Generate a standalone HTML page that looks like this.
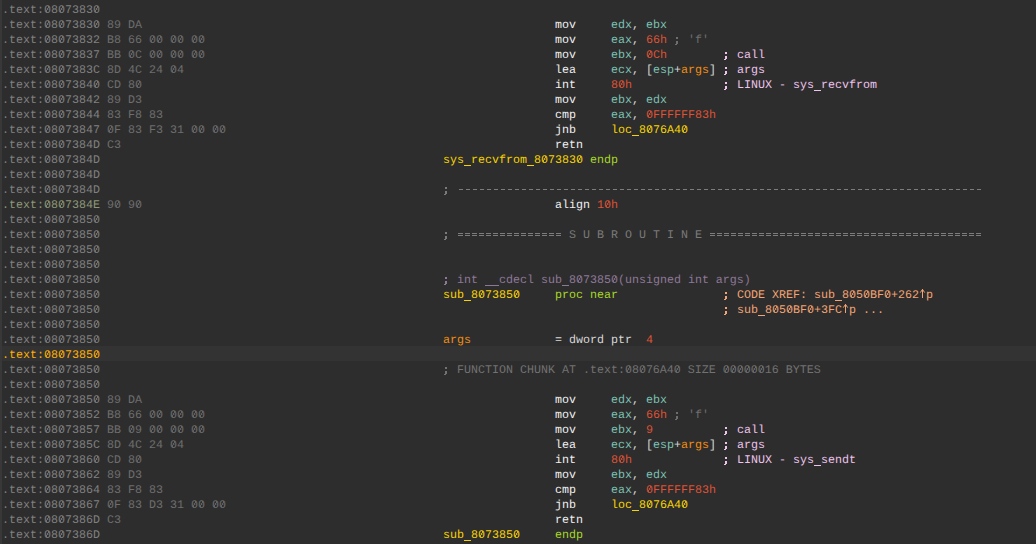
<!DOCTYPE html>
<html><head><meta charset="utf-8"><style>
html,body{margin:0;padding:0;width:1036px;height:544px;overflow:hidden;background:#2d2d2d;}
#v{position:absolute;left:0;top:0;width:1036px;height:544px;background:#2d2d2d;}
#stripe{position:absolute;left:0;top:0;width:2px;height:544px;background:#383838;}
.hlbar{position:absolute;left:2px;width:1034px;height:15px;background:#333333;}
.u{position:relative;}
.u::before{content:'';position:absolute;left:0;width:7px;top:12px;height:1px;background:currentColor;}
.sc{position:relative;-webkit-text-fill-color:transparent;}
.sc::before{content:'';position:absolute;left:2px;top:4px;width:2px;height:2px;background:currentColor;}
.sc::after{content:'';position:absolute;left:1px;top:8px;width:3px;height:4px;background:linear-gradient(currentColor,currentColor) 1px 0/2px 3px no-repeat,linear-gradient(currentColor,currentColor) 0 3px/2px 1px no-repeat;}
.z{position:relative;}
.z::before{content:'';position:absolute;left:3px;top:5px;width:1px;height:2px;background:#2d2d2d;}
.hlz .z::before{background:#333333;}
.z::after{content:'';position:absolute;left:2px;top:3px;width:3px;height:6px;background:linear-gradient(to bottom right,transparent 38%,currentColor 45%,currentColor 55%,transparent 62%);opacity:.8}
.t{position:absolute;white-space:pre;font-family:"Liberation Mono",monospace;font-size:11.6667px;line-height:15px;text-rendering:geometricPrecision;}
.addr{color:#808080;}
.bytes{color:#6e6e6e;}
.mn{color:#f0f0f0;}
.reg{color:#7cc2b4;}
.punc{color:#d8d8d8;}
.num{color:#de5236;}
.acmt{color:#6e6e6e;}
.cmt{color:#eec4ec;}
.argn{color:#f28e10;}
.loc{color:#f6d400;}
.fname{color:#f6d200;}
.kw{color:#a8d828;}
.sep{color:#7a7a7a;}
.proto{color:#8e7898;}
.xref{color:#f2a474;}
.chunk{color:#727272;}
.hladdr{color:#ffb000;}
.addr13{color:#8e9878;}
</style></head>
<body><div id="v"><div id="stripe"></div>
<div class="t" style="left:2px;top:3px"><span class="addr">.text:<span class="z">0</span>8<span class="z">0</span>7383<span class="z">0</span></span></div>
<div class="t" style="left:2px;top:18px"><span class="addr">.text:<span class="z">0</span>8<span class="z">0</span>7383<span class="z">0</span></span></div>
<div class="t bytes" style="left:107px;top:18px">89 DA</div>
<div class="t" style="left:555px;top:18px"><span class="mn">mov</span></div>
<div class="t" style="left:611px;top:18px"><span class="reg">edx</span><span class="punc">, </span><span class="reg">ebx</span></div>
<div class="t" style="left:2px;top:33px"><span class="addr">.text:<span class="z">0</span>8<span class="z">0</span>73832</span></div>
<div class="t bytes" style="left:107px;top:33px">B8 66 <span class="z">0</span><span class="z">0</span> <span class="z">0</span><span class="z">0</span> <span class="z">0</span><span class="z">0</span></div>
<div class="t" style="left:555px;top:33px"><span class="mn">mov</span></div>
<div class="t" style="left:611px;top:33px"><span class="reg">eax</span><span class="punc">, </span><span class="num">66h</span><span class="acmt"> <span class="sc">;</span> 'f'</span></div>
<div class="t" style="left:2px;top:48px"><span class="addr">.text:<span class="z">0</span>8<span class="z">0</span>73837</span></div>
<div class="t bytes" style="left:107px;top:48px">BB <span class="z">0</span>C <span class="z">0</span><span class="z">0</span> <span class="z">0</span><span class="z">0</span> <span class="z">0</span><span class="z">0</span></div>
<div class="t" style="left:555px;top:48px"><span class="mn">mov</span></div>
<div class="t" style="left:611px;top:48px"><span class="reg">ebx</span><span class="punc">, </span><span class="num"><span class="z">0</span>Ch</span></div>
<div class="t" style="left:723px;top:48px"><span class="cmt"><span class="sc">;</span> call</span></div>
<div class="t" style="left:2px;top:63px"><span class="addr">.text:<span class="z">0</span>8<span class="z">0</span>7383C</span></div>
<div class="t bytes" style="left:107px;top:63px">8D 4C 24 <span class="z">0</span>4</div>
<div class="t" style="left:555px;top:63px"><span class="mn">lea</span></div>
<div class="t" style="left:611px;top:63px"><span class="reg">ecx</span><span class="punc">, [</span><span class="reg">esp</span><span class="punc">+</span><span class="argn">args</span><span class="punc">]</span></div>
<div class="t" style="left:723px;top:63px"><span class="cmt"><span class="sc">;</span> args</span></div>
<div class="t" style="left:2px;top:78px"><span class="addr">.text:<span class="z">0</span>8<span class="z">0</span>7384<span class="z">0</span></span></div>
<div class="t bytes" style="left:107px;top:78px">CD 8<span class="z">0</span></div>
<div class="t" style="left:555px;top:78px"><span class="mn">int</span></div>
<div class="t" style="left:611px;top:78px"><span class="num">8<span class="z">0</span>h</span></div>
<div class="t" style="left:723px;top:78px"><span class="cmt"><span class="sc">;</span> LINUX - sys<span class="u"> </span>recvfrom</span></div>
<div class="t" style="left:2px;top:93px"><span class="addr">.text:<span class="z">0</span>8<span class="z">0</span>73842</span></div>
<div class="t bytes" style="left:107px;top:93px">89 D3</div>
<div class="t" style="left:555px;top:93px"><span class="mn">mov</span></div>
<div class="t" style="left:611px;top:93px"><span class="reg">ebx</span><span class="punc">, </span><span class="reg">edx</span></div>
<div class="t" style="left:2px;top:108px"><span class="addr">.text:<span class="z">0</span>8<span class="z">0</span>73844</span></div>
<div class="t bytes" style="left:107px;top:108px">83 F8 83</div>
<div class="t" style="left:555px;top:108px"><span class="mn">cmp</span></div>
<div class="t" style="left:611px;top:108px"><span class="reg">eax</span><span class="punc">, </span><span class="num"><span class="z">0</span>FFFFFF83h</span></div>
<div class="t" style="left:2px;top:123px"><span class="addr">.text:<span class="z">0</span>8<span class="z">0</span>73847</span></div>
<div class="t bytes" style="left:107px;top:123px"><span class="z">0</span>F 83 F3 31 <span class="z">0</span><span class="z">0</span> <span class="z">0</span><span class="z">0</span></div>
<div class="t" style="left:555px;top:123px"><span class="mn">jnb</span></div>
<div class="t" style="left:611px;top:123px"><span class="loc">loc<span class="u"> </span>8<span class="z">0</span>76A4<span class="z">0</span></span></div>
<div class="t" style="left:2px;top:138px"><span class="addr">.text:<span class="z">0</span>8<span class="z">0</span>7384D</span></div>
<div class="t bytes" style="left:107px;top:138px">C3</div>
<div class="t" style="left:555px;top:138px"><span class="mn">retn</span></div>
<div class="t" style="left:2px;top:153px"><span class="addr">.text:<span class="z">0</span>8<span class="z">0</span>7384D</span></div>
<div class="t" style="left:443px;top:153px"><span class="fname">sys<span class="u"> </span>recvfrom<span class="u"> </span>8<span class="z">0</span>7383<span class="z">0</span></span> <span class="kw">endp</span></div>
<div class="t" style="left:2px;top:168px"><span class="addr">.text:<span class="z">0</span>8<span class="z">0</span>7384D</span></div>
<div class="t" style="left:2px;top:183px"><span class="addr">.text:<span class="z">0</span>8<span class="z">0</span>7384D</span></div>
<div class="t" style="left:443px;top:183px"><span class="sep"><span class="sc">;</span></span></div>
<div class="t" style="left:2px;top:198px"><span class="addr13">.text:<span class="z">0</span>8<span class="z">0</span>7384E</span></div>
<div class="t bytes" style="left:107px;top:198px">9<span class="z">0</span> 9<span class="z">0</span></div>
<div class="t" style="left:555px;top:198px"><span class="mn">align</span> <span class="num">1<span class="z">0</span>h</span></div>
<div class="t" style="left:2px;top:213px"><span class="addr">.text:<span class="z">0</span>8<span class="z">0</span>7385<span class="z">0</span></span></div>
<div class="t" style="left:2px;top:228px"><span class="addr">.text:<span class="z">0</span>8<span class="z">0</span>7385<span class="z">0</span></span></div>
<div class="t" style="left:443px;top:228px"><span class="sep"><span class="sc">;</span></span></div>
<div class="t" style="left:569px;top:228px"><span class="sep">S U B R O U T I N E</span></div>
<div class="t" style="left:2px;top:243px"><span class="addr">.text:<span class="z">0</span>8<span class="z">0</span>7385<span class="z">0</span></span></div>
<div class="t" style="left:2px;top:258px"><span class="addr">.text:<span class="z">0</span>8<span class="z">0</span>7385<span class="z">0</span></span></div>
<div class="t" style="left:2px;top:273px"><span class="addr">.text:<span class="z">0</span>8<span class="z">0</span>7385<span class="z">0</span></span></div>
<div class="t" style="left:443px;top:273px"><span class="proto"><span class="sc">;</span> int <span class="u"> </span><span class="u"> </span>cdecl sub<span class="u"> </span>8<span class="z">0</span>7385<span class="z">0</span>(unsigned int args)</span></div>
<div class="t" style="left:2px;top:288px"><span class="addr">.text:<span class="z">0</span>8<span class="z">0</span>7385<span class="z">0</span></span></div>
<div class="t" style="left:443px;top:288px"><span class="fname">sub<span class="u"> </span>8<span class="z">0</span>7385<span class="z">0</span></span></div>
<div class="t" style="left:555px;top:288px"><span class="kw">proc near</span></div>
<div class="t" style="left:723px;top:288px"><span class="xref"><span class="sc">;</span> CODE XREF: sub<span class="u"> </span>8<span class="z">0</span>5<span class="z">0</span>BF<span class="z">0</span>+262 p</span></div>
<div class="t" style="left:2px;top:303px"><span class="addr">.text:<span class="z">0</span>8<span class="z">0</span>7385<span class="z">0</span></span></div>
<div class="t" style="left:723px;top:303px"><span class="xref"><span class="sc">;</span> sub<span class="u"> </span>8<span class="z">0</span>5<span class="z">0</span>BF<span class="z">0</span>+3FC p ...</span></div>
<div class="t" style="left:2px;top:318px"><span class="addr">.text:<span class="z">0</span>8<span class="z">0</span>7385<span class="z">0</span></span></div>
<div class="t" style="left:2px;top:333px"><span class="addr">.text:<span class="z">0</span>8<span class="z">0</span>7385<span class="z">0</span></span></div>
<div class="t" style="left:443px;top:333px"><span class="argn">args</span></div>
<div class="t" style="left:555px;top:333px"><span class="punc">= dword ptr  </span><span class="num">4</span></div>
<div class="hlbar" style="top:346px"></div>
<div class="t hlz" style="left:2px;top:348px"><span class="hladdr">.text:<span class="z">0</span>8<span class="z">0</span>7385<span class="z">0</span></span></div>
<div class="t" style="left:2px;top:363px"><span class="addr">.text:<span class="z">0</span>8<span class="z">0</span>7385<span class="z">0</span></span></div>
<div class="t" style="left:443px;top:363px"><span class="chunk"><span class="sc">;</span> FUNCTION CHUNK AT .text:<span class="z">0</span>8<span class="z">0</span>76A4<span class="z">0</span> SIZE <span class="z">0</span><span class="z">0</span><span class="z">0</span><span class="z">0</span><span class="z">0</span><span class="z">0</span>16 BYTES</span></div>
<div class="t" style="left:2px;top:378px"><span class="addr">.text:<span class="z">0</span>8<span class="z">0</span>7385<span class="z">0</span></span></div>
<div class="t" style="left:2px;top:393px"><span class="addr">.text:<span class="z">0</span>8<span class="z">0</span>7385<span class="z">0</span></span></div>
<div class="t bytes" style="left:107px;top:393px">89 DA</div>
<div class="t" style="left:555px;top:393px"><span class="mn">mov</span></div>
<div class="t" style="left:611px;top:393px"><span class="reg">edx</span><span class="punc">, </span><span class="reg">ebx</span></div>
<div class="t" style="left:2px;top:408px"><span class="addr">.text:<span class="z">0</span>8<span class="z">0</span>73852</span></div>
<div class="t bytes" style="left:107px;top:408px">B8 66 <span class="z">0</span><span class="z">0</span> <span class="z">0</span><span class="z">0</span> <span class="z">0</span><span class="z">0</span></div>
<div class="t" style="left:555px;top:408px"><span class="mn">mov</span></div>
<div class="t" style="left:611px;top:408px"><span class="reg">eax</span><span class="punc">, </span><span class="num">66h</span><span class="acmt"> <span class="sc">;</span> 'f'</span></div>
<div class="t" style="left:2px;top:423px"><span class="addr">.text:<span class="z">0</span>8<span class="z">0</span>73857</span></div>
<div class="t bytes" style="left:107px;top:423px">BB <span class="z">0</span>9 <span class="z">0</span><span class="z">0</span> <span class="z">0</span><span class="z">0</span> <span class="z">0</span><span class="z">0</span></div>
<div class="t" style="left:555px;top:423px"><span class="mn">mov</span></div>
<div class="t" style="left:611px;top:423px"><span class="reg">ebx</span><span class="punc">, </span><span class="num">9</span></div>
<div class="t" style="left:723px;top:423px"><span class="cmt"><span class="sc">;</span> call</span></div>
<div class="t" style="left:2px;top:438px"><span class="addr">.text:<span class="z">0</span>8<span class="z">0</span>7385C</span></div>
<div class="t bytes" style="left:107px;top:438px">8D 4C 24 <span class="z">0</span>4</div>
<div class="t" style="left:555px;top:438px"><span class="mn">lea</span></div>
<div class="t" style="left:611px;top:438px"><span class="reg">ecx</span><span class="punc">, [</span><span class="reg">esp</span><span class="punc">+</span><span class="argn">args</span><span class="punc">]</span></div>
<div class="t" style="left:723px;top:438px"><span class="cmt"><span class="sc">;</span> args</span></div>
<div class="t" style="left:2px;top:453px"><span class="addr">.text:<span class="z">0</span>8<span class="z">0</span>7386<span class="z">0</span></span></div>
<div class="t bytes" style="left:107px;top:453px">CD 8<span class="z">0</span></div>
<div class="t" style="left:555px;top:453px"><span class="mn">int</span></div>
<div class="t" style="left:611px;top:453px"><span class="num">8<span class="z">0</span>h</span></div>
<div class="t" style="left:723px;top:453px"><span class="cmt"><span class="sc">;</span> LINUX - sys<span class="u"> </span>sendt</span></div>
<div class="t" style="left:2px;top:468px"><span class="addr">.text:<span class="z">0</span>8<span class="z">0</span>73862</span></div>
<div class="t bytes" style="left:107px;top:468px">89 D3</div>
<div class="t" style="left:555px;top:468px"><span class="mn">mov</span></div>
<div class="t" style="left:611px;top:468px"><span class="reg">ebx</span><span class="punc">, </span><span class="reg">edx</span></div>
<div class="t" style="left:2px;top:483px"><span class="addr">.text:<span class="z">0</span>8<span class="z">0</span>73864</span></div>
<div class="t bytes" style="left:107px;top:483px">83 F8 83</div>
<div class="t" style="left:555px;top:483px"><span class="mn">cmp</span></div>
<div class="t" style="left:611px;top:483px"><span class="reg">eax</span><span class="punc">, </span><span class="num"><span class="z">0</span>FFFFFF83h</span></div>
<div class="t" style="left:2px;top:498px"><span class="addr">.text:<span class="z">0</span>8<span class="z">0</span>73867</span></div>
<div class="t bytes" style="left:107px;top:498px"><span class="z">0</span>F 83 D3 31 <span class="z">0</span><span class="z">0</span> <span class="z">0</span><span class="z">0</span></div>
<div class="t" style="left:555px;top:498px"><span class="mn">jnb</span></div>
<div class="t" style="left:611px;top:498px"><span class="loc">loc<span class="u"> </span>8<span class="z">0</span>76A4<span class="z">0</span></span></div>
<div class="t" style="left:2px;top:513px"><span class="addr">.text:<span class="z">0</span>8<span class="z">0</span>7386D</span></div>
<div class="t bytes" style="left:107px;top:513px">C3</div>
<div class="t" style="left:555px;top:513px"><span class="mn">retn</span></div>
<div class="t" style="left:2px;top:528px"><span class="addr">.text:<span class="z">0</span>8<span class="z">0</span>7386D</span></div>
<div class="t" style="left:443px;top:528px"><span class="fname">sub<span class="u"> </span>8<span class="z">0</span>7385<span class="z">0</span></span></div>
<div class="t" style="left:555px;top:528px"><span class="kw">endp</span></div>
<div style="position:absolute;left:457px;top:189px;width:525px;height:1px;background:repeating-linear-gradient(to right,transparent 0 2px,#7c7c7c 2px 6px,transparent 6px 7px)"></div>
<div style="position:absolute;left:457px;top:233px;width:105px;height:1px;background:repeating-linear-gradient(to right,transparent 0 1px,#7c7c7c 1px 6px,transparent 6px 7px)"></div>
<div style="position:absolute;left:457px;top:235px;width:105px;height:1px;background:repeating-linear-gradient(to right,transparent 0 1px,#7c7c7c 1px 6px,transparent 6px 7px)"></div>
<div style="position:absolute;left:709px;top:233px;width:273px;height:1px;background:repeating-linear-gradient(to right,transparent 0 1px,#7c7c7c 1px 6px,transparent 6px 7px)"></div>
<div style="position:absolute;left:709px;top:235px;width:273px;height:1px;background:repeating-linear-gradient(to right,transparent 0 1px,#7c7c7c 1px 6px,transparent 6px 7px)"></div>
<svg style="position:absolute;left:919px;top:285px" width="7" height="15" viewBox="0 0 7 15"><g fill="none" stroke="#f2a474" stroke-width="1"><path d="M3.5 4.2V13"/><path d="M1.3 7.6L3.5 4.4L5.7 7.6"/></g></svg>
<svg style="position:absolute;left:842px;top:300px" width="7" height="15" viewBox="0 0 7 15"><g fill="none" stroke="#f2a474" stroke-width="1"><path d="M3.5 4.2V13"/><path d="M1.3 7.6L3.5 4.4L5.7 7.6"/></g></svg>
</div></body></html>
